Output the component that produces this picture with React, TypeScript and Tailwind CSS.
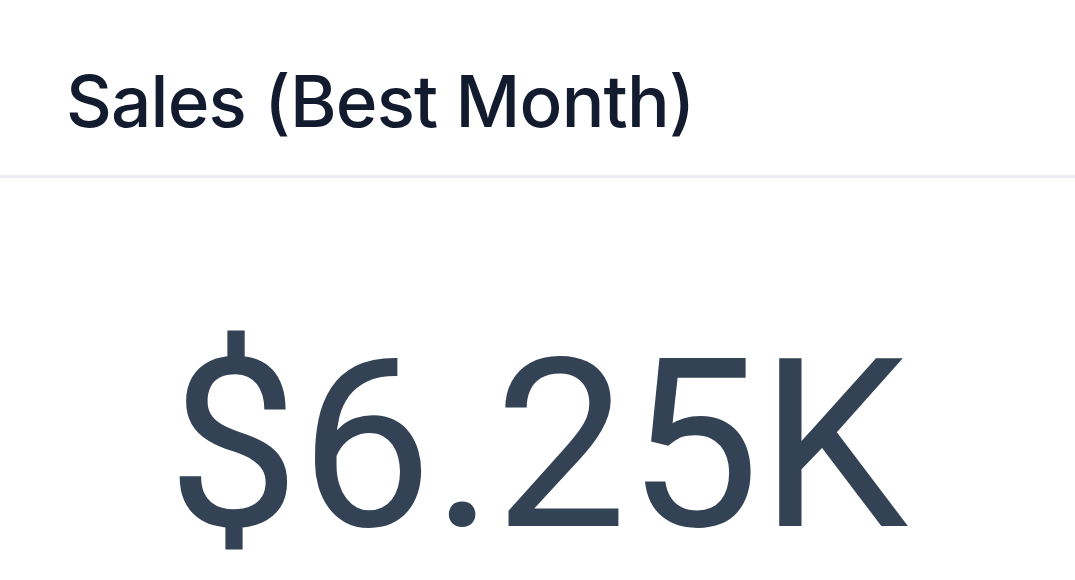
export default function App() {
  return (
    <div className="w-[1075px] h-[580px] overflow-hidden bg-white">
      {/* Card header */}
      <div className="pl-[66px] pt-[65px] pb-[38px] border-b-[3px] border-[#eceef3]">
        <h3 className="font-['Inter',sans-serif] font-medium text-[71px] leading-[72px] text-[#131b2e] tracking-[-0.8px]">
          Sales (Best Month)
        </h3>
      </div>

      {/* Metric */}
      <div className="pt-[168px] flex justify-center">
        <span className="font-['Roboto',sans-serif] font-normal text-[236px] leading-[200px] text-[#344256]">
          $6.25K
        </span>
      </div>
    </div>
  );
}
